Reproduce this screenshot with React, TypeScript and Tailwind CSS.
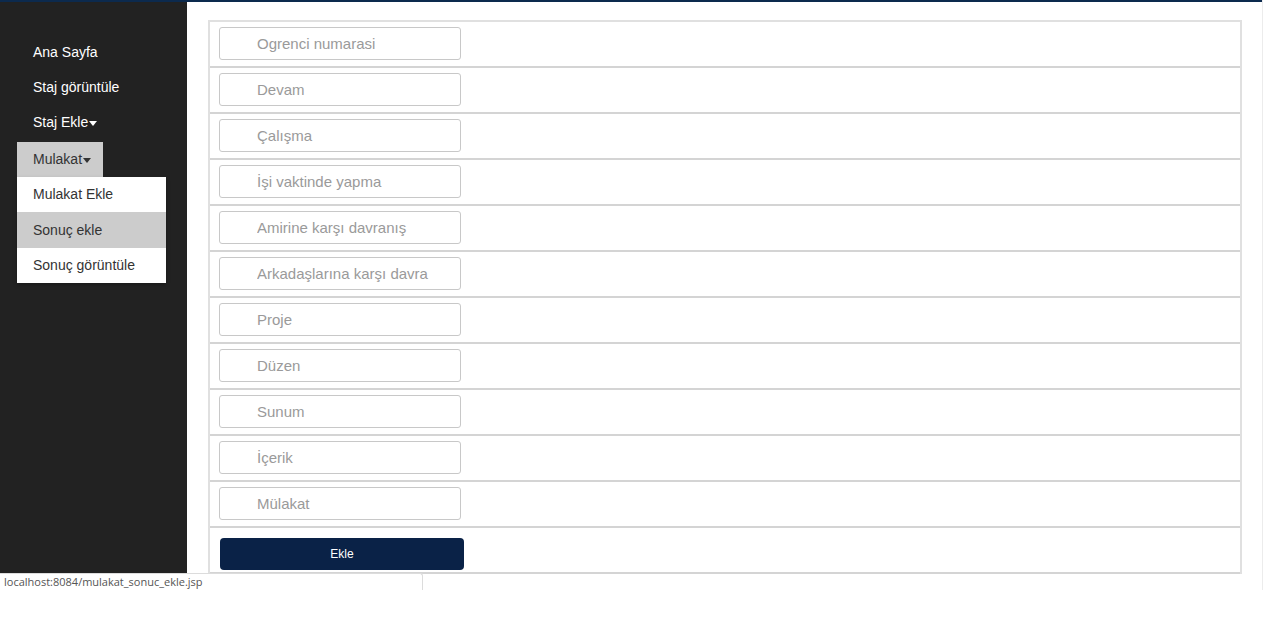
const fields = [
  "Ogrenci numarasi",
  "Devam",
  "Çalışma",
  "İşi vaktinde yapma",
  "Amirine karşı davranış",
  "Arkadaşlarına karşı davra",
  "Proje",
  "Düzen",
  "Sunum",
  "İçerik",
  "Mülakat",
];

function Caret() {
  return (
    <span className="ml-[1px] inline-block border-x-[4px] border-t-[5px] border-x-transparent border-t-current align-middle" />
  );
}

export default function App() {
  return (
    <div className="relative h-[617px] w-full bg-white font-['Liberation_Sans',Arial,sans-serif]">
      <div className="flex h-[590px] w-[1263px] flex-col border-r border-[#ececec]">
        {/* top line */}
        <div className="h-[2px] bg-[#0c2a4e]" />

        <div className="flex flex-1">
          {/* Sidebar */}
          <aside className="relative w-[187px] bg-[#222222] pt-[33px] text-[14px]">
            <a className="block h-[35px] pl-[33px] leading-[35px] text-white">Ana Sayfa</a>
            <a className="block h-[35px] pl-[33px] leading-[35px] text-white">Staj görüntüle</a>
            <a className="block h-[35px] pl-[33px] leading-[35px] text-white">
              Staj Ekle
              <Caret />
            </a>

            <div className="relative mt-[2px] ml-[17px]">
              <a className="block h-[35px] w-[86px] bg-[#cccccc] pl-[16px] leading-[35px] text-[#333]">
                Mulakat
                <Caret />
              </a>

              {/* Dropdown */}
              <div className="absolute left-0 top-[35px] z-10 w-[149px] bg-white text-[#333] shadow-[0_2px_4px_rgba(0,0,0,0.25)]">
                <a className="block h-[35px] pl-[16px] leading-[35px]">Mulakat Ekle</a>
                <a className="block h-[36px] bg-[#cccccc] pl-[16px] leading-[36px]">Sonuç ekle</a>
                <a className="block h-[35px] pl-[16px] leading-[35px]">Sonuç görüntüle</a>
              </div>
            </div>
          </aside>

          {/* Main */}
          <main className="flex-1 pl-[21px] pt-[18px]">
            <div className="w-[1034px] border-2 border-b-0 border-[#e0e0e0]">
              {fields.map((f) => (
                <div key={f} className="border-b-2 border-[#d4d4d4] pb-[6px] pl-[9px] pt-[5px]">
                  <input
                    placeholder={f}
                    className="block h-[33px] w-[242px] rounded-[3px] border border-[#c8c8c8] pl-[37px] font-['Liberation_Sans'] text-[15px] text-[#333] outline-none placeholder:text-[#9a9a9a]"
                  />
                </div>
              ))}
              <div className="border-b-2 border-[#d4d4d4] pb-[2px] pl-[10px] pt-[10px]">
                <button className="flex h-[32px] w-[244px] items-center justify-center rounded-[4px] bg-[#0a2247] font-['Liberation_Sans'] text-[12px] text-white">
                  Ekle
                </button>
              </div>
            </div>
          </main>
        </div>
      </div>

      {/* Status bar */}
      <div className="absolute left-0 top-[573px] h-[17px] w-[423px] rounded-tr-[3px] border-r border-t border-[#dcdcdc] bg-white pl-[4px] font-['Open_Sans',sans-serif] text-[11px] leading-[16px] text-[#555]">
        localhost:8084/mulakat_sonuc_ekle.jsp
      </div>
    </div>
  );
}
